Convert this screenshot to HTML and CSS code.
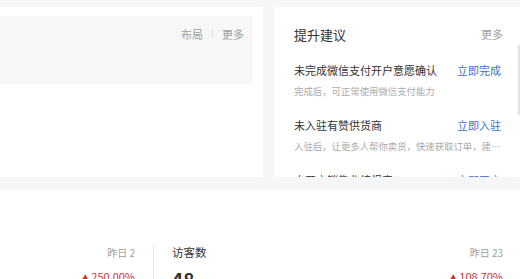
FILE: index.html
```html
<!DOCTYPE html>
<html lang="zh-CN">
<head>
<meta charset="utf-8">
<link rel="stylesheet" href="styles.css">
</head>
<body>
<div class="top">
  <div class="card left">
    <div class="panel">
      <div class="panel-actions">
        <span class="act">布局</span>
        <span class="sep"></span>
        <span class="act">更多</span>
      </div>
    </div>
  </div>
  <div class="card right">
    <div class="rhead">
      <span class="rtitle">提升建议</span>
      <span class="more">更多</span>
    </div>
    <div class="item">
      <div class="item-row">
        <span class="item-title">未完成微信支付开户意愿确认</span>
        <span class="link">立即完成</span>
      </div>
      <div class="item-desc">完成后，可正常使用微信支付能力</div>
    </div>
    <div class="item">
      <div class="item-row">
        <span class="item-title">未入驻有赞供货商</span>
        <span class="link">立即入驻</span>
      </div>
      <div class="item-desc">入驻后，让更多人帮你卖货，快速获取订单，建立稳定的供货渠道</div>
    </div>
    <div class="item">
      <div class="item-row">
        <span class="item-title">未开启销售业绩报表</span>
        <span class="link">立即开启</span>
      </div>
      <div class="item-desc">开启后，可查看销售业绩</div>
    </div>
    <div class="scroll"></div>
  </div>
</div>
<div class="card bottom">
  <div class="stat first">
    <div class="stat-head">
      <span class="stat-name"></span>
      <span class="yest">昨日 2</span>
    </div>
    <div class="stat-body">
      <span class="num"></span>
      <span class="rate"><span class="tri">▲</span> 250.00%</span>
    </div>
  </div>
  <div class="stat second">
    <div class="stat-head">
      <span class="stat-name">访客数</span>
      <span class="yest">昨日 23</span>
    </div>
    <div class="stat-body">
      <span class="num">48</span>
      <span class="rate"><span class="tri">▲</span> 108.70%</span>
    </div>
  </div>
</div>
</body>
</html>
```

FILE: styles.css
```css
html, body {
  margin: 0;
  padding: 0;
  height: 279px;
  overflow: hidden;
}
body {
  background: #f5f6f8;
  font-family: "Noto Sans CJK SC", "Noto Sans", sans-serif;
  color: #333;
}
.top {
  display: flex;
  gap: 11px;
  padding-top: 7px;
  height: 170px;
}
.card {
  background: #fff;
}
.left {
  width: 263px;
  flex: none;
  padding: 9px 10px 0 0;
  box-sizing: border-box;
}
.panel {
  background: #f7f7f7;
  height: 68px;
  padding: 10px 9px 0 0;
  box-sizing: border-box;
}
.panel-actions {
  display: flex;
  justify-content: flex-end;
  align-items: center;
  height: 16px;
  font-size: 11px;
  color: #a0a0a0;
}
.sep {
  width: 1px;
  height: 10px;
  background: #e0e0e0;
  margin: 0 9px;
}
.right {
  flex: 1;
  position: relative;
  overflow: hidden;
  padding: 0 17px 0 20px;
}
.rhead {
  display: flex;
  justify-content: space-between;
  align-items: center;
  padding-top: 18px;
  height: 18px;
}
.rtitle {
  font-size: 13px;
  color: #323233;
}
.more {
  font-size: 11px;
  color: #a0a0a0;
}
.item {
  padding-top: 18px;
}
.item-row {
  display: flex;
  justify-content: space-between;
  align-items: center;
  height: 18px;
}
.item-title {
  font-size: 11px;
  color: #323233;
}
.link {
  font-size: 11px;
  color: #3a6fd6;
  margin-right: 2px;
}
.item-desc {
  margin-top: 5px;
  height: 14px;
  line-height: 14px;
  font-size: 9.4px;
  color: #aaa;
  white-space: nowrap;
  overflow: hidden;
  text-overflow: ellipsis;
}
.scroll {
  position: absolute;
  right: 0;
  top: 38px;
  width: 2px;
  height: 70px;
  background: #e2e2e2;
}
.bottom {
  margin-top: 12px;
  height: 90px;
  display: flex;
  padding-top: 56px;
  box-sizing: border-box;
}
.stat {
  box-sizing: border-box;
}
.first {
  width: 154px;
  padding-right: 18px;
  border-right: 1px solid #ebebeb;
}
.second {
  flex: 1;
  padding: 0 17px 0 18px;
}
.stat-head {
  display: flex;
  justify-content: space-between;
  align-items: center;
  height: 14px;
}
.stat-name {
  font-size: 11.5px;
  color: #333;
}
.yest {
  font-size: 10px;
  color: #a0a0a0;
}
.stat-body {
  display: flex;
  justify-content: space-between;
  align-items: flex-start;
  margin-top: 8px;
  height: 24px;
}
.num {
  font-size: 19px;
  font-weight: 700;
  color: #333;
  line-height: 24px;
}
.rate {
  font-size: 11px;
  color: #d42f2f;
  line-height: 14px;
  margin-top: 2px;
}
.tri {
  font-size: 7px;
  vertical-align: 1px;
}
```
